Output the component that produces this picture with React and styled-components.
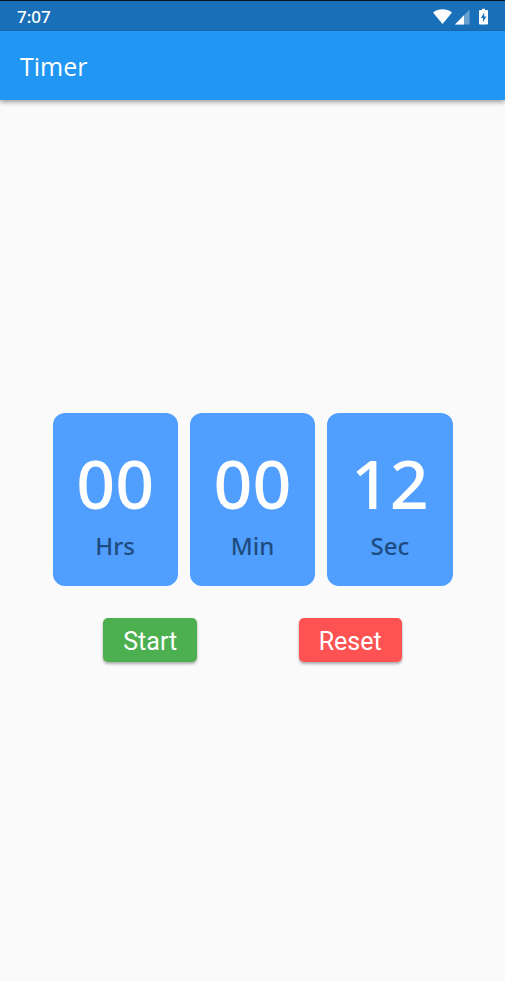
import React, { useEffect, useState } from "react";
import styled, { createGlobalStyle } from "styled-components";

const GlobalStyle = createGlobalStyle`
  *, *::before, *::after { box-sizing: border-box; }
  body {
    margin: 0;
    background: #fafafa;
    font-family: "Noto Sans", "Open Sans", sans-serif;
  }
`;

const Screen = styled.div`
  display: flex;
  flex-direction: column;
  min-height: 100vh;
  background: #fafafa;
`;

const StatusBar = styled.div`
  display: flex;
  align-items: center;
  justify-content: space-between;
  height: 31px;
  padding: 2px 16px 0 17px;
  border-top: 1px solid #06141f;
  background: #1a70b8;
  color: #fff;
`;

const Clock = styled.time`
  font-size: 17px;
  font-weight: 500;
  line-height: 20px;
`;

const StatusIcons = styled.svg`
  display: block;
  width: 56px;
  height: 18px;
`;

const AppBar = styled.header`
  display: flex;
  align-items: center;
  height: 69px;
  padding: 0 20px;
  background: #2196f3;
  box-shadow: 0 2px 5px rgba(0, 0, 0, 0.4);
`;

const Title = styled.h1`
  margin: 0;
  color: #fff;
  font-family: "Open Sans", "Noto Sans", sans-serif;
  font-size: 25px;
  font-weight: 400;
  line-height: 32px;
`;

const Content = styled.main`
  display: flex;
  flex: 1;
  flex-direction: column;
  align-items: center;
  justify-content: center;
  padding: 0 16px 6px;
`;

const Panel = styled.div`
  display: flex;
  flex-direction: column;
  gap: 32px;
  width: 100%;
  max-width: 400px;
`;

const Cards = styled.div`
  display: grid;
  grid-template-columns: repeat(3, 1fr);
  gap: 12px;
`;

const Card = styled.div`
  display: flex;
  flex-direction: column;
  align-items: center;
  padding: 24px 8px;
  border-radius: 12px;
  background: #509fff;
`;

const Digits = styled.span`
  color: #fff;
  font-size: 68px;
  font-weight: 500;
  line-height: 92px;
`;

const Unit = styled.span`
  color: #1f4c80;
  font-size: 24px;
  font-weight: 500;
  line-height: 33px;
`;

const Actions = styled.div`
  display: flex;
  justify-content: space-around;
`;

const ActionButton = styled.button`
  height: 44px;
  padding: 4px 20px 0;
  border: 0;
  border-radius: 5px;
  background: ${({ $color }) => $color};
  box-shadow: 0 2px 3px rgba(0, 0, 0, 0.32);
  color: #fff;
  font-family: Roboto, sans-serif;
  font-size: 25px;
  font-weight: 400;
  line-height: 30px;
  cursor: pointer;
`;

const pad = (n) => String(n).padStart(2, "0");

export default function App() {
  const [seconds, setSeconds] = useState(12);
  const [running, setRunning] = useState(false);

  useEffect(() => {
    if (!running) return undefined;
    const id = setInterval(() => setSeconds((s) => s + 1), 1000);
    return () => clearInterval(id);
  }, [running]);

  const reset = () => {
    setRunning(false);
    setSeconds(0);
  };

  const units = [
    { label: "Hrs", value: Math.floor(seconds / 3600) },
    { label: "Min", value: Math.floor(seconds / 60) % 60 },
    { label: "Sec", value: seconds % 60 },
  ];

  return (
    <Screen>
      <GlobalStyle />
      <StatusBar>
        <Clock>7:07</Clock>
        <StatusIcons viewBox="0 0 56 18" aria-hidden="true">
          <path d="M0 4.5C5.5 0.2 13.5 0.2 19 4.5L9.5 16Z" fill="#fff" />
          <path d="M36.500 1.500V16.500H22Z" fill="#fff" opacity="0.35" />
          <path d="M31 7.200V16.500H22Z" fill="#fff" />
          <path
            fillRule="evenodd"
            d="M47 2H49V0.800H52V2H54Q55 2 55 3V15.500Q55 16.500 54 16.500H47Q46 16.500 46 15.500V3Q46 2 47 2ZM51.200 4.500L48 10H50V14.300L53.300 8.600H51.200Z"
            fill="#fff"
          />
        </StatusIcons>
      </StatusBar>
      <AppBar>
        <Title>Timer</Title>
      </AppBar>
      <Content>
        <Panel>
          <Cards>
            {units.map(({ label, value }) => (
              <Card key={label}>
                <Digits>{pad(value)}</Digits>
                <Unit>{label}</Unit>
              </Card>
            ))}
          </Cards>
          <Actions>
            <ActionButton type="button" $color="#4caf50" onClick={() => setRunning(true)}>
              Start
            </ActionButton>
            <ActionButton type="button" $color="#ff5252" onClick={reset}>
              Reset
            </ActionButton>
          </Actions>
        </Panel>
      </Content>
    </Screen>
  );
}
